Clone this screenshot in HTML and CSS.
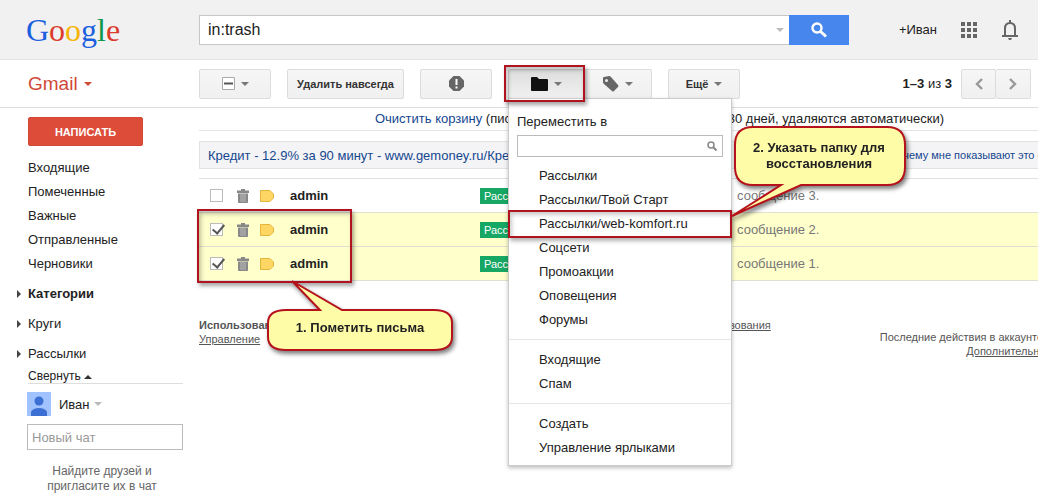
FILE: index.html
```html
<!DOCTYPE html>
<html lang="ru">
<head>
    <meta charset="UTF-8">
    <meta name="viewport" content="width=device-width, initial-scale=1.0">
    <title>Gmail - Корзина</title>
    <link rel="stylesheet" href="styles.css">
</head>
<body>
    <header class="header">
        <a href="#" class="logo"><span class="blue">G</span><span class="red">o</span><span class="yellow">o</span><span class="blue">g</span><span class="green">l</span><span class="red">e</span></a>
        <form class="search">
            <div class="search-field">
                <input type="text" value="in:trash" aria-label="Поиск">
                <span class="arrow light"></span>
            </div>
            <button type="button" class="search-button" aria-label="Найти">
                <svg width="18" height="18" viewBox="0 0 18 18"><circle cx="7" cy="7" r="4.5" fill="none" stroke="#fff" stroke-width="2.4"/><path d="M10 10l6 5.5" stroke="#fff" stroke-width="3"/></svg>
            </button>
        </form>
        <nav class="account">
            <a href="#">+Иван</a>
            <button type="button" class="icon-button" aria-label="Приложения">
                <svg width="16" height="16" viewBox="0 0 16 16" fill="#666"><path d="M0 0h4v4H0zM6 0h4v4H6zM12 0h4v4h-4zM0 6h4v4H0zM6 6h4v4H6zM12 6h4v4h-4zM0 12h4v4H0zM6 12h4v4H6zM12 12h4v4h-4z"/></svg>
            </button>
            <button type="button" class="icon-button" aria-label="Оповещения">
                <svg width="18" height="20" viewBox="0 0 18 20"><path d="M4 15.5V8.5C4 5 6 3 9 3s5 2 5 5.5v7" fill="none" stroke="#666" stroke-width="2"/><path d="M1 15h16v2H1zM7 18h4l-1 2H8zM8 0h2v3H8z" fill="#666"/></svg>
            </button>
        </nav>
    </header>

    <div class="toolbar">
        <a href="#" class="gmail">Gmail <span class="arrow red-arrow"></span></a>
        <div class="tools">
            <button type="button" class="btn small" aria-label="Выбрать">
                <svg width="13" height="13" viewBox="0 0 13 13"><path d="M.5.5h12v12H.5z" fill="#fff" stroke="#aaa"/><path d="M2 5.5h9v2H2z" fill="#555"/></svg>
                <span class="arrow"></span>
            </button>
            <button type="button" class="btn wide">Удалить навсегда</button>
            <button type="button" class="btn small" aria-label="Спам">
                <svg width="15" height="15" viewBox="0 0 15 15"><path d="M4.5 0h6L15 4.5v6L10.5 15h-6L0 10.5v-6z" fill="#666"/><path d="M6.500 3h2v6h-2zM6.5 10.5h2v2h-2z" fill="#fff"/></svg>
            </button>
            <div class="btn-group">
                <div class="move">
                    <button type="button" class="btn active" aria-label="Переместить в">
                        <svg width="17" height="14" viewBox="0 0 17 14"><path d="M0 1q0-1 1-1h5l2 2h8q1 0 1 1v10q0 1-1 1H1q-1 0-1-1z" fill="#111"/></svg>
                        <span class="arrow"></span>
                    </button>
                    <div class="menu">
                        <label for="folder">Переместить в</label>
                        <div class="menu-search">
                            <input type="text" id="folder">
                            <svg width="10" height="10" viewBox="0 0 10 10" fill="none" stroke="#888"><circle cx="4" cy="4" r="3" stroke-width="1.5"/><path d="M6 6l3.5 3.5" stroke-width="2"/></svg>
                        </div>
                        <ul>
                            <li><a href="#">Рассылки</a></li>
                            <li><a href="#">Рассылки/Твой Старт</a></li>
                            <li class="marked"><a href="#">Рассылки/web-komfort.ru</a></li>
                            <li><a href="#">Соцсети</a></li>
                            <li><a href="#">Промоакции</a></li>
                            <li><a href="#">Оповещения</a></li>
                            <li><a href="#">Форумы</a></li>
                        </ul>
                        <ul>
                            <li><a href="#">Входящие</a></li>
                            <li><a href="#">Спам</a></li>
                        </ul>
                        <ul>
                            <li><a href="#">Создать</a></li>
                            <li><a href="#">Управление ярлыками</a></li>
                        </ul>
                        <div class="callout callout-folder">
                            <svg width="176" height="94" viewBox="0 0 176 94"><path d="M22 2H156Q174 2 174 20V42Q174 60 156 60H70L1 91L50 60H22Q4 60 4 42V20Q4 2 22 2Z" fill="#fffca8" stroke="#b5121b" stroke-width="2"/></svg>
                            <p>2. Указать папку для<br>восстановления</p>
                        </div>
                    </div>
                </div>
                <button type="button" class="btn labels" aria-label="Ярлыки">
                    <svg width="17" height="16" viewBox="0 0 17 16"><path d="M1 2q0-1 1-1l5-1q1 0 2 1l7 8q1 1 0 2l-4 4q-1 1-2 0L2 8Q1 7 1 6z" fill="#666"/><circle cx="4.5" cy="4.5" r="1.5" fill="#f1f1f1"/></svg>
                    <span class="arrow"></span>
                </button>
            </div>
            <button type="button" class="btn small">Ещё <span class="arrow"></span></button>
        </div>
        <div class="pager">
            <span><b>1–3</b> из <b>3</b></span>
            <div class="btn-group">
                <button type="button" class="btn page-button" aria-label="Назад"><svg width="8" height="12" viewBox="0 0 8 12"><path d="M7 1L2 6l5 5" fill="none" stroke="#999" stroke-width="2.4"/></svg></button>
                <button type="button" class="btn page-button" aria-label="Вперёд"><svg width="8" height="12" viewBox="0 0 8 12"><path d="M1 1l5 5-5 5" fill="none" stroke="#999" stroke-width="2.4"/></svg></button>
            </div>
        </div>
    </div>

    <div class="page">
        <aside class="sidebar">
            <button type="button" class="compose">НАПИСАТЬ</button>
            <nav class="folders">
                <a href="#">Входящие</a>
                <a href="#">Помеченные</a>
                <a href="#">Важные</a>
                <a href="#">Отправленные</a>
                <a href="#">Черновики</a>
            </nav>
            <nav class="groups">
                <a href="#"><b>Категории</b></a>
                <a href="#">Круги</a>
                <a href="#">Рассылки</a>
            </nav>
            <a href="#" class="collapse">Свернуть <span class="arrow up"></span></a>
            <div class="chat">
                <div class="chat-user">
                    <svg width="24" height="24" viewBox="0 0 24 24"><path d="M0 0h24v24H0z" fill="#a0c3ff"/><circle cx="12" cy="9" r="4.5" fill="#3b6fd4"/><path d="M4 24v-4q2-4 8-4t8 4v4z" fill="#3b6fd4"/></svg>
                    <span>Иван</span>
                    <span class="arrow light"></span>
                </div>
                <input type="text" placeholder="Новый чат" aria-label="Новый чат">
                <p>Найдите друзей и<br>пригласите их в чат</p>
            </div>
        </aside>

        <main class="main">
            <div class="mail">
                <p class="notice"><a href="#">Очистить корзину</a> (письма, находящиеся в корзине более 30 дней, удаляются автоматически)</p>
                <div class="ad">
                    <a href="#">Кредит - 12.9% за 90 минут - www.gemoney.ru/Кредит</a>
                    <a href="#" class="why">Почему мне показывают это объявление?</a>
                </div>
                <div class="messages">
                    <table>
                        <colgroup>
                            <col class="col-check"><col class="col-trash"><col class="col-mark"><col class="col-from"><col class="col-label"><col>
                        </colgroup>
                        <tr>
                            <td><input type="checkbox" aria-label="Сообщение 3"></td>
                            <td><svg width="12" height="14" viewBox="0 0 12 14"><path d="M4 0h4v1.5h4V4H0V1.5h4zM1 4.5h10V13q0 1-1 1H2q-1 0-1-1z" fill="#888"/><path d="M4 5v8M6 5v8M8 5v8" stroke="#bbb"/></svg></td>
                            <td><svg width="14" height="12" viewBox="0 0 14 12"><path d="M.5.5H10L13.5 4v4L10 11.5H.5z" fill="#fdd663" stroke="#e5b53c"/></svg></td>
                            <td><b>admin</b></td>
                            <td><span class="label">Рассылки</span></td>
                            <td class="text">сообщение 3.</td>
                        </tr>
                        <tr class="selected">
                            <td><input type="checkbox" aria-label="Сообщение 2" checked></td>
                            <td><svg width="12" height="14" viewBox="0 0 12 14"><path d="M4 0h4v1.5h4V4H0V1.5h4zM1 4.5h10V13q0 1-1 1H2q-1 0-1-1z" fill="#888"/><path d="M4 5v8M6 5v8M8 5v8" stroke="#bbb"/></svg></td>
                            <td><svg width="14" height="12" viewBox="0 0 14 12"><path d="M.5.5H10L13.5 4v4L10 11.5H.5z" fill="#fdd663" stroke="#e5b53c"/></svg></td>
                            <td><b>admin</b></td>
                            <td><span class="label">Рассылки</span></td>
                            <td class="text">сообщение 2.</td>
                        </tr>
                        <tr class="selected">
                            <td><input type="checkbox" aria-label="Сообщение 1" checked></td>
                            <td><svg width="12" height="14" viewBox="0 0 12 14"><path d="M4 0h4v1.5h4V4H0V1.5h4zM1 4.5h10V13q0 1-1 1H2q-1 0-1-1z" fill="#888"/><path d="M4 5v8M6 5v8M8 5v8" stroke="#bbb"/></svg></td>
                            <td><svg width="14" height="12" viewBox="0 0 14 12"><path d="M.5.5H10L13.5 4v4L10 11.5H.5z" fill="#fdd663" stroke="#e5b53c"/></svg></td>
                            <td><b>admin</b></td>
                            <td><span class="label">Рассылки</span></td>
                            <td class="text">сообщение 1.</td>
                        </tr>
                    </table>
                    <div class="frame"></div>
                    <div class="callout callout-mail">
                        <svg width="188" height="74" viewBox="0 0 188 74"><path d="M20 31H54L26 2L76 31H168Q186 31 186 44V58Q186 71 168 71H20Q2 71 2 58V44Q2 31 20 31Z" fill="#fffca8" stroke="#b5121b" stroke-width="2"/></svg>
                        <p>1. Пометить письма</p>
                    </div>
                </div>
                <footer class="footer">
                    <div><b>Использовано: 0 ГБ</b><br><a href="#">Управление</a></div>
                    <div class="terms"><a href="#">Правила сервиса и условия использования</a></div>
                    <div class="activity">Последние действия в аккаунте: 35 мин. назад<br><a href="#">Дополнительная информация</a></div>
                </footer>
            </div>
        </main>
    </div>
</body>
</html>
```
FILE: styles.css
```css
* {
    box-sizing: border-box;
}

body {
    font-family: "Liberation Sans", Arial, sans-serif;
    font-size: 13px;
    color: #222;
    background-color: #fff;
    margin: 0;
}

a {
    color: inherit;
    text-decoration: none;
}

p, ul {
    margin: 0;
    padding: 0;
    list-style: none;
}

svg {
    display: block;
    flex: none;
}

button, input {
    font-family: inherit;
    margin: 0;
}

button {
    cursor: pointer;
}

.arrow {
    display: inline-block;
    border: 4px solid transparent;
    border-top-color: #777;
    border-bottom: 0;
}

.arrow.light {
    border-top-color: #bbb;
}

.arrow.up {
    border-top: 0;
    border-bottom: 4px solid #333;
    vertical-align: middle;
}

.arrow.red-arrow {
    border-top-color: #d14836;
}

/* header */
.header {
    display: flex;
    align-items: center;
    height: 60px;
    background-color: #f1f1f1;
    border-bottom: 1px solid #e5e5e5;
}

.logo {
    flex: none;
    width: 199px;
    padding-left: 26px;
    font-family: "Liberation Serif", serif;
    font-size: 32px;
    line-height: 58px;
}

.blue {
    color: #1b5fe0;
}

.red {
    color: #dc3b2c;
}

.yellow {
    color: #f5b400;
}

.green {
    color: #109648;
}

.search {
    display: flex;
    flex: 0 1 650px;
    height: 30px;
}

.search-field {
    display: flex;
    flex: 1;
    align-items: center;
    padding-right: 5px;
    background-color: #fff;
    border: 1px solid #c6c6c6;
    border-right: 0;
}

.search-field input {
    flex: 1;
    min-width: 0;
    padding: 0 8px;
    border: 0;
    outline: 0;
    font-size: 16px;
    color: #222;
}

.search-button {
    display: flex;
    align-items: center;
    justify-content: center;
    width: 60px;
    border: 1px solid #4285f4;
    background-color: #4787ed;
}

.account {
    display: flex;
    flex: 1;
    align-items: center;
    justify-content: flex-end;
    padding-right: 19px;
}

.icon-button {
    margin-left: 24px;
    padding: 0;
    border: 0;
    background: none;
}

/* toolbar */
.toolbar {
    display: flex;
    align-items: center;
    height: 48px;
    border-bottom: 1px solid #ddd;
}

.gmail {
    display: flex;
    flex: none;
    align-items: center;
    gap: 6px;
    width: 199px;
    padding-left: 28px;
    font-size: 19px;
    color: #d14836;
}

.tools {
    display: flex;
    gap: 16px;
}

.btn {
    display: flex;
    align-items: center;
    justify-content: center;
    gap: 6px;
    height: 30px;
    padding: 0;
    border: 1px solid #dcdcdc;
    border-radius: 2px;
    background-image: linear-gradient(#f6f6f6, #f0f0f0);
    font-size: 11px;
    font-weight: bold;
    color: #333;
    white-space: nowrap;
}

.btn.small {
    width: 72px;
}

.btn.wide {
    width: 117px;
}

.btn.active {
    width: 76px;
    border-color: #ccc;
    background-image: linear-gradient(#ddd, #f1f1f1);
}

.btn.labels {
    width: 68px;
    border-left: 0;
}

.btn.page-button {
    width: 35px;
}

.page-button + .page-button {
    border-left: 0;
}

.btn-group {
    display: flex;
}

.pager {
    display: flex;
    align-items: center;
    gap: 9px;
    margin-left: auto;
    padding-right: 7px;
    white-space: nowrap;
}

/* move-to menu */
.move {
    position: relative;
    z-index: 2;
}

.move::after {
    content: "";
    position: absolute;
    inset: -4px -1px -3px -4px;
    border: 2px solid #b0121f;
    box-shadow: 2px 3px 4px rgba(0, 0, 0, 0.35), inset 2px 3px 4px rgba(0, 0, 0, 0.25);
    pointer-events: none;
}

.menu {
    position: absolute;
    top: 29px;
    left: 0;
    width: 224px;
    padding-bottom: 5px;
    border: 1px solid #ccc;
    background-color: #fff;
    box-shadow: 0 2px 4px rgba(0, 0, 0, 0.25);
}

.menu label {
    display: block;
    padding: 14px 8px 4px;
    line-height: 18px;
}

.menu-search {
    display: flex;
    align-items: center;
    height: 22px;
    margin: 0 8px 7px;
    padding-right: 5px;
    border: 1px solid #bbb;
}

.menu-search input {
    flex: 1;
    min-width: 0;
    border: 0;
    outline: 0;
}

.menu ul {
    padding: 0 0 7px;
}

.menu ul + ul {
    padding-top: 8px;
    border-top: 1px solid #e5e5e5;
}

.menu ul:last-of-type {
    padding-bottom: 0;
}

.menu li {
    position: relative;
    padding-left: 30px;
    line-height: 24px;
    white-space: nowrap;
}

.menu .marked::after {
    content: "";
    position: absolute;
    inset: -2px -1px;
    border: 2px solid #b0121f;
    box-shadow: 2px 3px 4px rgba(0, 0, 0, 0.3), inset 2px 3px 4px rgba(0, 0, 0, 0.2);
    pointer-events: none;
}

/* callouts */
.callout {
    position: absolute;
    font-weight: bold;
    text-align: center;
    line-height: 16px;
    filter: drop-shadow(2px 3px 2px rgba(0, 0, 0, 0.5));
}

.callout p {
    position: absolute;
    left: 0;
    right: 0;
}

.callout-folder {
    top: 26px;
    left: 222px;
}

.callout-folder p {
    top: 15px;
}

.callout-mail {
    top: 101px;
    left: 67px;
}

.callout-mail p {
    top: 41px;
}

/* sidebar */
.page {
    display: flex;
}

.sidebar {
    flex: none;
    width: 196px;
    padding: 9px 13px 0 28px;
}

.compose {
    display: block;
    width: 115px;
    height: 29px;
    border: 1px solid #d14836;
    border-radius: 2px;
    background-color: #dd4b39;
    font-size: 11px;
    font-weight: bold;
    color: #fff;
}

.folders {
    padding: 10px 0 3px;
}

.folders a {
    display: block;
    line-height: 24px;
}

.groups a {
    display: flex;
    align-items: center;
    line-height: 30px;
}

.groups a::before {
    content: "";
    margin: 0 7px 0 -11px;
    border: 4px solid transparent;
    border-left-color: #444;
    border-right: 0;
}

.collapse {
    display: block;
    font-size: 12px;
    line-height: 14px;
    border-bottom: 1px solid #ddd;
}

.chat {
    margin-left: -1px;
    padding-top: 8px;
}

.chat-user {
    display: flex;
    align-items: center;
}

.chat-user span {
    margin-left: 8px;
}

.chat-user .arrow {
    margin-left: 4px;
}

.chat input {
    display: block;
    width: 100%;
    height: 26px;
    margin-top: 8px;
    padding: 0 4px;
    border: 1px solid #bbb;
    font-size: 13px;
}

.chat input::placeholder {
    color: #999;
}

.chat p {
    padding: 14px 6px 0 0;
    font-size: 12px;
    line-height: 15px;
    text-align: center;
    color: #666;
}

/* mail list, the left padding leaves room for the frame */
.main {
    flex: 1;
    min-width: 0;
    padding-left: 3px;
    overflow: hidden;
}

.mail {
    min-width: 921px;
}

.notice {
    line-height: 22px;
    text-align: center;
    border-bottom: 1px solid #e5e5e5;
}

.notice a, .ad a {
    color: #15478f;
}

.ad {
    display: flex;
    align-items: center;
    justify-content: space-between;
    height: 28px;
    margin: 10px 0 9px;
    padding: 0 14px 0 8px;
    border: 1px solid #e2e2e2;
    background-color: #f4f4f6;
}

.ad .why {
    font-size: 11px;
}

.messages {
    position: relative;
}

table {
    width: 100%;
    table-layout: fixed;
    border-collapse: collapse;
    border-top: 1px solid #e0e0e0;
}

.col-check {
    width: 38px;
}

.col-trash {
    width: 23px;
}

.col-mark {
    width: 30px;
}

.col-from {
    width: 190px;
}

.col-label {
    width: 257px;
}

td {
    height: 34px;
    padding: 0;
    border-bottom: 1px solid #e0e0d0;
}

td:first-child {
    padding-left: 11px;
}

.selected {
    background-color: #ffc;
}

.text {
    color: #777;
}

.label {
    display: inline-block;
    padding: 0 4px;
    background-color: #16a765;
    font-size: 11px;
    line-height: 16px;
    color: #fff;
}

input[type="checkbox"] {
    display: block;
    width: 13px;
    height: 13px;
    appearance: none;
    border: 1px solid #bbb;
    background-color: #fff;
}

input[type="checkbox"]:checked::after {
    content: "";
    display: block;
    width: 5px;
    height: 10px;
    margin: -2px 0 0 4px;
    border: solid #555;
    border-width: 0 2px 2px 0;
    transform: rotate(40deg);
}

.frame {
    position: absolute;
    top: 31px;
    left: -2px;
    width: 155px;
    height: 74px;
    border: 2px solid #b0121f;
    box-shadow: 2px 3px 4px rgba(0, 0, 0, 0.35), inset 2px 3px 4px rgba(0, 0, 0, 0.25);
}

.footer {
    display: grid;
    grid-template-columns: 1fr 1fr 1fr;
    padding-top: 37px;
    font-size: 11px;
    line-height: 14px;
    color: #555;
    white-space: nowrap;
}

.footer a {
    text-decoration: underline;
}

.terms {
    text-align: center;
}

.activity {
    padding-top: 12px;
    text-align: right;
}
```
